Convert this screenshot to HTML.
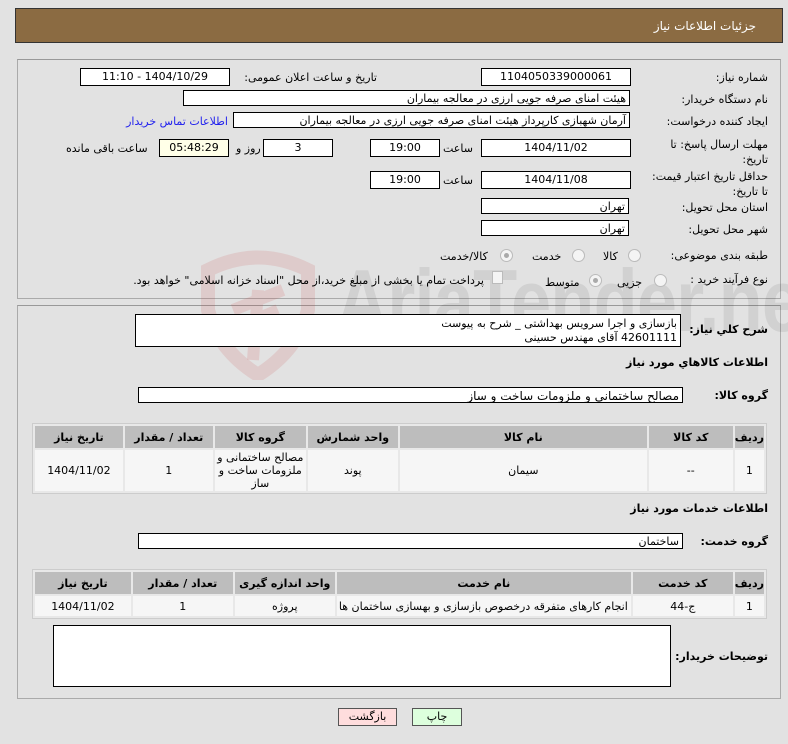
<!DOCTYPE html>
<html><head><meta charset="utf-8">
<style>
body{margin:0;width:788px;height:744px;background:#e2e2e2;font-family:"DejaVu Sans",sans-serif;font-size:11px;color:#000;position:relative;overflow:hidden}
.a{position:absolute;white-space:nowrap}
.hdr{left:15px;top:8px;width:766px;height:33px;background:#8b6b42;border:1px solid #333}
.hdr span{position:absolute;right:26px;top:10px;color:#fff;font-size:12px}
.pnl{position:absolute;left:17px;width:762px;border:1px solid #aaa;border-top-color:#999;background:#e2e2e2}
.in{position:absolute;background:#fff;border:1px solid #000;height:16px;line-height:16px;text-align:center;overflow:hidden;white-space:nowrap;direction:rtl}
.r{text-align:right;padding-right:3px;box-sizing:border-box}
.lb{position:absolute;right:20px;text-align:right;direction:rtl;white-space:nowrap}
.b{font-weight:bold;font-size:11px}
.rad{position:absolute;width:11px;height:11px;border-radius:50%;border:1px solid #bbb;background:#f4f4f4}
.rad.on::after{content:"";position:absolute;left:3px;top:3px;width:5px;height:5px;border-radius:50%;background:#aaa}
table{position:absolute;border-collapse:separate;border-spacing:2px;background:#e8e8e8;border:1px solid #ccc;direction:rtl;font-size:11px}
th{background:#bdbdbd;font-weight:bold;height:22px;text-align:center;padding:0}
td{background:#f6f6f6;text-align:center;padding:0;line-height:13px}
.wm{position:absolute;left:336px;top:250px;font-size:88px;font-weight:bold;color:#000;opacity:.07;letter-spacing:-1px;font-family:"Liberation Sans Narrow","Liberation Sans",sans-serif;transform:scaleX(.82);transform-origin:left top}
</style></head><body>
<div class="a hdr"><span>جزئیات اطلاعات نیاز</span></div>

<div class="pnl" style="top:59px;height:238px"></div>
<div class="pnl" style="top:305px;height:392px"></div>

<svg class="a" style="left:198px;top:250px" width="120" height="130" viewBox="0 0 120 130"><path d="M10 20 Q60 -5 110 20 L110 60 Q100 100 60 125 Q20 100 10 60 Z" fill="none" stroke="#c33" stroke-width="14" opacity=".13"/><path d="M35 60 L85 40 M45 75 L80 60 M55 110 L60 40" stroke="#c33" stroke-width="12" opacity=".13"/></svg>
<div class="wm">AriaTender.net</div>

<div class="lb" style="top:71px">شماره نیاز:</div>
<div class="in" style="left:481px;top:68px;width:148px">1104050339000061</div>
<div class="a" style="right:411px;top:71px;direction:rtl">تاریخ و ساعت اعلان عمومی:</div>
<div class="in" style="left:80px;top:68px;width:148px">1404/10/29 - 11:10</div>

<div class="lb" style="top:93px">نام دستگاه خریدار:</div>
<div class="in r" style="left:183px;top:90px;width:447px">هیئت امنای صرفه جویی ارزی در معالجه بیماران</div>

<div class="lb" style="top:115px">ایجاد کننده درخواست:</div>
<div class="in r" style="left:233px;top:112px;width:397px">آرمان شهبازی کارپرداز هیئت امنای صرفه جویی ارزی در معالجه بیماران</div>
<div class="a" style="right:560px;top:115px;color:#22e;direction:rtl">اطلاعات تماس خریدار</div>

<div class="lb" style="top:137px;line-height:15px">مهلت ارسال پاسخ: تا<br>تاریخ:</div>
<div class="in" style="left:481px;top:139px;width:148px">1404/11/02</div>
<div class="a" style="left:443px;top:142px">ساعت</div>
<div class="in" style="left:370px;top:139px;width:68px">19:00</div>
<div class="in" style="left:263px;top:139px;width:68px">3</div>
<div class="a" style="left:236px;top:142px">روز و</div>
<div class="in" style="left:159px;top:139px;width:68px;background:#ffffe8">05:48:29</div>
<div class="a" style="left:66px;top:142px">ساعت باقی مانده</div>

<div class="lb" style="top:169px;line-height:15px">حداقل تاریخ اعتبار قیمت:<br>تا تاریخ:</div>
<div class="in" style="left:481px;top:171px;width:148px">1404/11/08</div>
<div class="a" style="left:443px;top:174px">ساعت</div>
<div class="in" style="left:370px;top:171px;width:68px">19:00</div>

<div class="lb" style="top:201px">استان محل تحویل:</div>
<div class="in r" style="left:481px;top:198px;width:148px">تهران</div>
<div class="lb" style="top:223px">شهر محل تحویل:</div>
<div class="in r" style="left:481px;top:220px;width:148px">تهران</div>

<div class="lb" style="top:249px">طبقه بندی موضوعی:</div>
<div class="rad" style="left:628px;top:249px"></div><div class="a" style="left:603px;top:250px">کالا</div>
<div class="rad" style="left:572px;top:249px"></div><div class="a" style="left:532px;top:250px">خدمت</div>
<div class="rad on" style="left:500px;top:249px"></div><div class="a" style="left:440px;top:250px">کالا/خدمت</div>

<div class="lb" style="top:273px">نوع فرآیند خرید :</div>
<div class="rad" style="left:654px;top:274px"></div><div class="a" style="left:617px;top:276px">جزیی</div>
<div class="rad on" style="left:589px;top:274px"></div><div class="a" style="left:545px;top:276px">متوسط</div>
<div class="a" style="left:492px;top:271px;width:9px;height:11px;border:1px solid #bbb;background:#f4f4f4"></div>
<div class="a" style="right:304px;top:274px;direction:rtl">پرداخت تمام یا بخشی از مبلغ خرید،از محل "اسناد خزانه اسلامی" خواهد بود.</div>

<div class="lb b" style="top:323px">شرح کلي نیاز:</div>
<div class="in r" style="left:135px;top:314px;width:546px;height:33px;line-height:14px;padding-top:2px;white-space:normal">بازسازی و اجرا سرویس بهداشتی _ شرح به پیوست<br>42601111 آقای مهندس حسینی</div>

<div class="lb b" style="top:356px">اطلاعات کالاهاي مورد نیاز</div>
<div class="lb b" style="top:389px">گروه کالا:</div>
<div class="in r" style="left:138px;top:387px;width:545px;font-size:12px">مصالح ساختمانی و ملزومات ساخت و ساز</div>

<table style="left:32px;top:423px;width:735px">
<tr><th style="width:26px">ردیف</th><th style="width:84px">کد کالا</th><th style="width:247px">نام کالا</th><th style="width:90px">واحد شمارش</th><th style="width:91px">گروه کالا</th><th style="width:88px">تعداد / مقدار</th><th>تاریخ نیاز</th></tr>
<tr style="height:41px"><td>1</td><td>--</td><td>سیمان</td><td>پوند</td><td>مصالح ساختمانی و ملزومات ساخت و ساز</td><td>1</td><td>1404/11/02</td></tr>
</table>

<div class="lb b" style="top:502px">اطلاعات خدمات مورد نیاز</div>
<div class="lb b" style="top:535px">گروه خدمت:</div>
<div class="in r" style="left:138px;top:533px;width:545px">ساختمان</div>

<table style="left:32px;top:569px;width:735px">
<tr><th style="width:26px">ردیف</th><th style="width:100px">کد خدمت</th><th style="width:294px">نام خدمت</th><th style="width:100px">واحد اندازه گیری</th><th style="width:100px">تعداد / مقدار</th><th>تاریخ نیاز</th></tr>
<tr style="height:20px"><td>1</td><td>ج-44</td><td style="text-align:right;padding-right:3px">انجام کارهای متفرقه درخصوص بازسازی و بهسازی ساختمان ها</td><td>پروژه</td><td>1</td><td>1404/11/02</td></tr>
</table>

<div class="lb b" style="top:650px">توضیحات خریدار:</div>
<div class="in" style="left:53px;top:625px;width:616px;height:60px"></div>

<div class="a" style="left:338px;top:708px;width:57px;height:16px;background:#fdd;border:1px solid #555;text-align:center;line-height:16px">بازگشت</div>
<div class="a" style="left:412px;top:708px;width:48px;height:16px;background:#dfd;border:1px solid #555;text-align:center;line-height:16px">چاپ</div>
</body></html>
